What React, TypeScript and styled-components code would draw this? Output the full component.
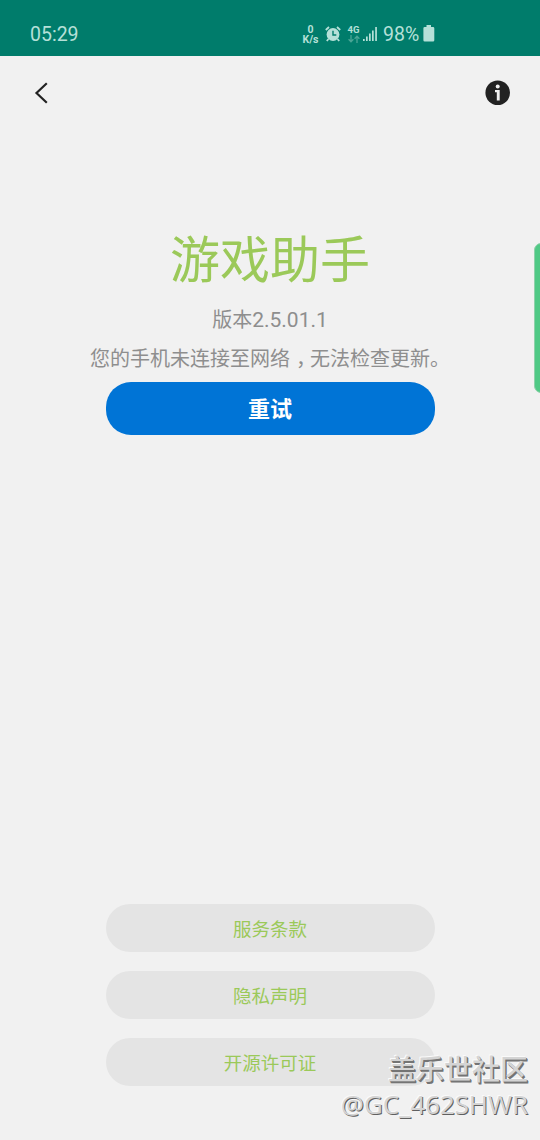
import React from 'react';
import styled, { createGlobalStyle } from 'styled-components';

const Global = createGlobalStyle`
  * { box-sizing: border-box; }
  body { margin: 0; background: #f1f1f1; }
`;

const Screen = styled.div`
  position: relative;
  display: flex;
  flex-direction: column;
  align-items: center;
  width: 540px;
  height: 1140px;
  overflow: hidden;
  background: #f1f1f1;
  font-family: Roboto, 'Noto Sans CJK SC', sans-serif;
`;

const StatusBar = styled.header`
  display: flex;
  flex: none;
  align-items: center;
  width: 100%;
  height: 56px;
  padding: 12px 105px 0 30px;
  background: #007c6b;
  color: #b5e0d8;
`;

const Clock = styled.time`
  margin-right: auto;
  padding-top: 2px;
  font-size: 19.5px;
  line-height: 24px;
`;

const Speed = styled.div`
  display: flex;
  flex-direction: column;
  align-items: center;
  width: 17px;
  margin-right: 6px;
  padding-top: 2px;
  font-size: 10.5px;
  font-weight: 700;
  line-height: 10px;
`;

const AlarmIcon = styled.svg`
  width: 16px;
  height: 16px;
  margin-right: 6px;
`;

const Network = styled.div`
  display: flex;
  flex-direction: column;
  align-items: center;
  width: 13px;
  margin-right: 3px;
  font-size: 9.5px;
  font-weight: 700;
  line-height: 9px;
`;

const ArrowsIcon = styled.svg`
  width: 12px;
  height: 8px;
  margin-top: 1px;
`;

const SignalIcon = styled.svg`
  width: 14px;
  height: 16px;
  margin-right: 6px;
`;

const Percent = styled.span`
  width: 37px;
  margin-right: 3px;
  padding-top: 2px;
  font-size: 19.5px;
  line-height: 24px;
`;

const BatteryIcon = styled.svg`
  width: 12px;
  height: 17px;
  margin-bottom: 1px;
`;

const Toolbar = styled.nav`
  display: flex;
  flex: none;
  align-items: center;
  justify-content: space-between;
  width: 100%;
  height: 73px;
  padding: 0 29px 0 34px;
`;

const IconButton = styled.button`
  display: flex;
  padding: 0;
  border: 0;
  background: none;
`;

const Title = styled.h1`
  margin: 95px 0 0;
  color: #9bc959;
  font-size: 50px;
  font-weight: 400;
  line-height: 74px;
`;

const Version = styled.p`
  margin: 7px 0 0;
  color: #8e8e8e;
  font-size: 20px;
  line-height: 30px;
`;

const VersionNumber = styled.span`
  font-size: 21px;
`;

const Message = styled.p`
  margin: 9px 0 0;
  color: #8e8e8e;
  font-size: 20px;
  line-height: 30px;
  white-space: nowrap;
`;

const Comma = styled.span`
  padding-left: 6px;
  letter-spacing: -6px;
`;

const RetryButton = styled.button`
  flex: none;
  width: 329px;
  height: 53px;
  margin-top: 8px;
  padding: 3px 0 0;
  border: 0;
  border-radius: 25px;
  background: #0074d6;
  color: #fff;
  font: 700 22px/32px Roboto, 'Noto Sans CJK SC', sans-serif;
`;

const Links = styled.div`
  display: flex;
  flex-direction: column;
  gap: 19px;
  margin: auto 0 54px;
`;

const LinkButton = styled.button`
  width: 329px;
  height: 48px;
  padding: 4px 0 0;
  border: 0;
  border-radius: 24px;
  background: #e4e4e4;
  color: #9bc959;
  font: 400 18.5px/28px Roboto, 'Noto Sans CJK SC', sans-serif;
`;

const EdgeHandle = styled.div`
  position: absolute;
  top: 243px;
  right: -8px;
  width: 14px;
  height: 150px;
  border: 1px solid #8fd0aa;
  border-radius: 7px;
  background: #50c985;
`;

const Watermark = styled.div`
  position: absolute;
  right: 12px;
  bottom: 19px;
  display: flex;
  flex-direction: column;
  align-items: flex-end;
  color: #d4d4d4;
  white-space: nowrap;
`;

const Community = styled.span`
  margin-bottom: 1px;
  font: 500 28px/36px 'Noto Sans CJK SC', sans-serif;
  text-shadow: 1px 1px 0 #747474, 1.5px 1.5px 0 #747474, -1px -1px 0 #fafafa;
`;

const UserName = styled.span`
  font: 400 25.8px/34px 'Noto Sans', sans-serif;
  text-shadow: 1px 1px 0 #606060, -1px -1px 0 #fafafa;
`;

const links = ['服务条款', '隐私声明', '开源许可证'];

export default function App() {
  return (
    <Screen>
      <Global />
      <StatusBar>
        <Clock>05:29</Clock>
        <Speed>
          <span>0</span>
          <span>K/s</span>
        </Speed>
        <AlarmIcon viewBox="0 0 16 16" fill="none" stroke="#b5e0d8">
          <circle cx="8" cy="8.5" r="6.4" fill="#b5e0d8" stroke="none" />
          <path d="M.8 4 4 1M15.2 4 12 1M3.5 13 1.8 15M12.5 13l1.7 2" strokeWidth="1.8" />
          <path d="M8 4.8V9h3.3" stroke="#007c6b" strokeWidth="1.4" />
        </AlarmIcon>
        <Network>
          <span>4G</span>
          <ArrowsIcon viewBox="0 0 12 8" fill="none" stroke="#4ba596" strokeWidth="1.3">
            <path d="M3 0v7M.6 4.3 3 6.8l2.4-2.5M9 8V1M6.6 3.7 9 1.2l2.4 2.5" />
          </ArrowsIcon>
        </Network>
        <SignalIcon viewBox="0 0 14 16" fill="#b5e0d8">
          <path d="M0 13h1.7v2H0zM3 10.5h1.7V15H3zM6 7.5h1.7V15H6zM9 4.5h1.7V15H9zM12.2 1h1.7v14h-1.7z" />
        </SignalIcon>
        <Percent>98%</Percent>
        <BatteryIcon viewBox="0 0 12 17" fill="#b5e0d8">
          <path d="M3.5 0h4.5v2h2q1.3 0 1.3 1.3v11.9q0 1.3-1.3 1.3H1.7q-1.3 0-1.3-1.3V3.3Q.4 2 1.7 2h1.8z" />
        </BatteryIcon>
      </StatusBar>
      <Toolbar>
        <IconButton aria-label="返回">
          <svg width="15" height="22" viewBox="0 0 15 22" fill="none" stroke="#222" strokeWidth="2.2">
            <path d="M12.8 1.3 2.5 11l10.3 9.7" />
          </svg>
        </IconButton>
        <IconButton aria-label="信息">
          <svg width="26" height="26" viewBox="0 0 26 26">
            <circle cx="12.7" cy="12.7" r="12.3" fill="#222" />
            <circle cx="12.7" cy="6.4" r="2" fill="#f1f1f1" />
            <path d="M10 10h4.7v10.5h-2.9v-8.2H10z" fill="#f1f1f1" />
          </svg>
        </IconButton>
      </Toolbar>
      <Title>游戏助手</Title>
      <Version>
        版本<VersionNumber>2.5.01.1</VersionNumber>
      </Version>
      <Message>
        您的手机未连接至网络<Comma>，</Comma>无法检查更新。
      </Message>
      <RetryButton>重试</RetryButton>
      <Links>
        {links.map((label) => (
          <LinkButton key={label}>{label}</LinkButton>
        ))}
      </Links>
      <EdgeHandle />
      <Watermark>
        <Community>盖乐世社区</Community>
        <UserName>@GC_462SHWR</UserName>
      </Watermark>
    </Screen>
  );
}
